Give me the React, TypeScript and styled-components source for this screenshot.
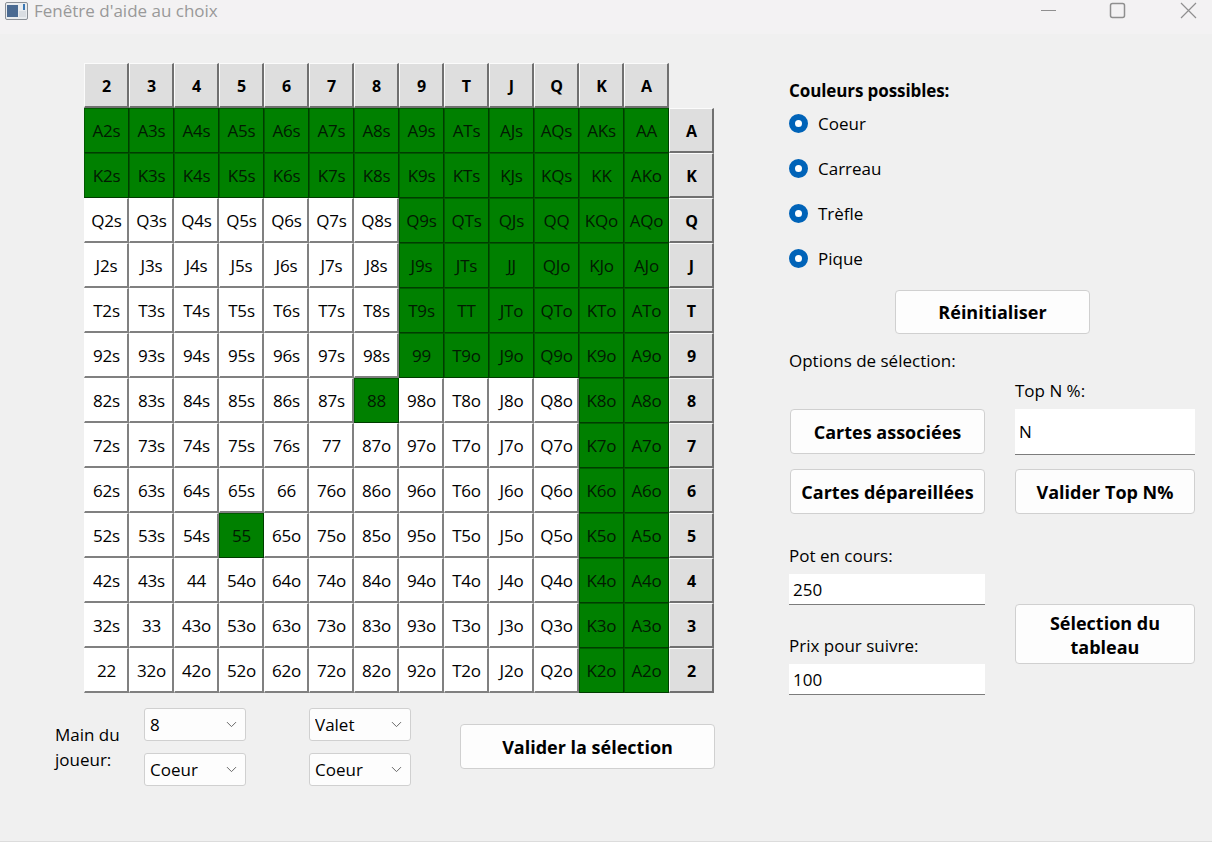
import styled, { createGlobalStyle } from "styled-components";
import { ChevronDown } from "lucide-react";

const GlobalStyle = createGlobalStyle`
  html, body {
    margin: 0;
    padding: 0;
    background: #f0f0f0;
  }
  * {
    box-sizing: border-box;
  }
`;

const FONT = `"Open Sans", "Noto Sans", "Liberation Sans", sans-serif`;

const Page = styled.div`
  width: 1212px;
  height: 842px;
  overflow: hidden;
  display: flex;
  flex-direction: column;
  font-family: ${FONT};
  color: #000;
  background: #f0f0f0;
  border-bottom: 1px solid #dcdcdc;
`;

const TitleBar = styled.header`
  height: 34px;
  flex-shrink: 0;
  display: flex;
  align-items: flex-start;
  background: #f3f2f3;
  padding-left: 5px;
`;

const WindowIcon = styled.svg`
  width: 23px;
  height: 18px;
  margin-top: 2px;
`;

const Title = styled.span`
  margin-left: 6px;
  font-size: 17px;
  line-height: 22px;
  color: #999;
`;

const WindowButtons = styled.div`
  margin-left: auto;
  display: flex;
  margin-right: 15px;
  gap: 54px;
`;

const WindowGlyph = styled.svg`
  width: 17px;
  height: 20px;
  stroke: #8f8f8f;
  fill: none;
  overflow: visible;
`;

const Content = styled.main`
  flex: 1;
  display: flex;
  padding: 29px 0 0 55px;
`;

const LeftColumn = styled.section`
  width: 660px;
  display: flex;
  flex-direction: column;
`;

const RangeGrid = styled.div`
  display: grid;
  grid-template-columns: repeat(14, 45px);
  grid-auto-rows: 45px;
  margin-left: 29px;
  width: 630px;
`;

const HeaderCell = styled.div`
  display: flex;
  align-items: center;
  justify-content: center;
  padding: 1px 0 0 1px;
  background: #dedede;
  border-top: 1px solid #fbfbfb;
  border-left: 1px solid #fbfbfb;
  border-right: 2px solid #707070;
  border-bottom: 2px solid #707070;
  font-size: 16px;
  font-weight: 700;
`;

const EmptyCell = styled.div``;

const HandCell = styled.div<{ $selected: boolean }>`
  display: flex;
  align-items: center;
  justify-content: center;
  padding-left: ${(p) => (p.$selected ? 0 : 1)}px;
  font-size: 17px;
  letter-spacing: -0.2px;
  background: ${(p) => (p.$selected ? "#008000" : "#ffffff")};
  border-top: 1px solid ${(p) => (p.$selected ? "#005a00" : "#ffffff")};
  border-left: 1px solid ${(p) => (p.$selected ? "#005a00" : "#ffffff")};
  border-right: ${(p) => (p.$selected ? "1px solid #003c00" : "2px solid #808080")};
  border-bottom: ${(p) => (p.$selected ? "1px solid #003c00" : "2px solid #808080")};
  color: ${(p) => (p.$selected ? "#021a02" : "#000")};
`;

const HandRow = styled.div`
  display: grid;
  grid-template-columns: 89px 102px 63px 102px 49px 255px;
  grid-template-rows: 33px 33px;
  row-gap: 12px;
  margin-top: 15px;
`;

const HandLabel = styled.div`
  grid-row: 1 / span 2;
  align-self: center;
  font-size: 17px;
  line-height: 25px;
`;

const ComboWrap = styled.div`
  position: relative;
  height: 33px;
`;

const Combo = styled.select`
  appearance: none;
  width: 100%;
  height: 100%;
  padding: 0 0 0 5px;
  background: #fdfdfd;
  border: 1px solid #d0d0d0;
  border-radius: 3px;
  font-family: ${FONT};
  font-size: 17px;
  color: #000;
`;

const ComboChevron = styled(ChevronDown)`
  position: absolute;
  right: 6px;
  top: 8px;
  width: 17px;
  height: 17px;
  color: #666;
  stroke-width: 1.4;
  pointer-events: none;
`;

const ActionButton = styled.button<{ $height: number }>`
  height: ${(p) => p.$height}px;
  width: 100%;
  background: #fdfdfd;
  border: 1px solid #d0d0d0;
  border-radius: 4px;
  font-family: ${FONT};
  font-size: 18px;
  font-weight: 700;
  line-height: 24px;
  color: #000;
  padding: 0 4px;
`;

const ValidateButton = styled(ActionButton)`
  grid-column: 6;
  grid-row: 1 / span 2;
  align-self: center;
  margin-top: -1px;
`;

const TableButton = styled(ActionButton)`
  padding-top: 2px;
`;

const RightColumn = styled.aside`
  width: 406px;
  margin-left: 74px;
  padding-top: 16px;
  display: flex;
  flex-direction: column;
`;

const SectionTitle = styled.div`
  font-size: 17px;
  font-weight: 700;
  line-height: 24px;
  letter-spacing: -0.1px;
  margin-bottom: 3px;
`;

const RadioList = styled.div`
  display: flex;
  flex-direction: column;
`;

const RadioRow = styled.label`
  height: 45px;
  display: flex;
  align-items: center;
  gap: 10px;
  font-size: 17px;
  padding-bottom: 11px;
`;

const RadioDot = styled.input`
  appearance: none;
  margin: 0;
  width: 19px;
  height: 19px;
  border-radius: 50%;
  background: #fff;
  border: 6px solid #0063b8;
`;

const ResetRow = styled.div`
  width: 195px;
  margin: 4px 0 0 106px;
`;

const PlainLabel = styled.div`
  font-size: 17px;
  line-height: 24px;
`;

const OptionsLabel = styled(PlainLabel)`
  margin-top: 15px;
`;

const OptionsGrid = styled.div`
  display: grid;
  grid-template-columns: 196px 180px;
  column-gap: 30px;
  grid-template-rows: 31px 45px 45px;
  margin-top: 5px;
`;

const TopLabel = styled(PlainLabel)`
  grid-column: 2;
  margin-top: 1px;
`;

const OptionCell = styled.div`
  padding-left: 1px;
`;

const ValidateCell = styled.div`
  margin-top: 15px;
  grid-column: 2;
  grid-row: 3;
`;

const PairedCell = styled(OptionCell)`
  margin-top: 15px;
`;

const TextField = styled.input<{ $height: number; $size: number }>`
  display: block;
  width: 100%;
  height: ${(p) => p.$height}px;
  padding: 0 4px;
  background: #ffffff;
  border: none;
  border-bottom: 1px solid #7c7c7c;
  font-family: ${FONT};
  font-size: ${(p) => p.$size}px;
  color: #000;
  outline: none;
`;

const BottomGrid = styled.div`
  display: grid;
  grid-template-columns: 196px 180px;
  column-gap: 30px;
  margin-top: 59px;
`;

const PotColumn = styled.div`
  display: flex;
  flex-direction: column;
`;

const PotLabel = styled(PlainLabel)`
  margin-top: -14px;
  margin-bottom: 6px;
`;

const FollowLabel = styled(PlainLabel)`
  margin-top: 29px;
  margin-bottom: 6px;
`;

const TableButtonCell = styled.div`
  padding-top: 46px;
`;

const RANKS = ["A", "K", "Q", "J", "T", "9", "8", "7", "6", "5", "4", "3", "2"];
const COLS = [...RANKS].reverse();

// how many cols are filled from the right, per row; the lone pairs are separate
const GREEN_FROM: Record<string, number> = {
  A: 0,
  K: 0,
  Q: 7,
  J: 7,
  T: 7,
  "9": 7,
  "8": 11,
  "7": 11,
  "6": 11,
  "5": 11,
  "4": 11,
  "3": 11,
  "2": 11,
};
const LONE_PAIRS = ["88", "55"];

const handName = (row: string, col: string): string => {
  if (row === col) return row + col;
  const suited = RANKS.indexOf(row) < RANKS.indexOf(col);
  return suited ? `${row}${col}s` : `${col}${row}o`;
};

const Suit = ["Coeur", "Carreau", "Trèfle", "Pique"];

const Select = ({ value, options }: { value: string; options: string[] }) => (
  <ComboWrap>
    <Combo defaultValue={value}>
      {options.map((o) => (
        <option key={o}>{o}</option>
      ))}
    </Combo>
    <ComboChevron />
  </ComboWrap>
);

const CARD_NAMES = ["8", "9", "10", "Valet", "Dame", "Roi", "As"];

const App = () => {
  return (
    <Page>
      <GlobalStyle />
      <TitleBar>
        <WindowIcon viewBox="0 0 23 18">
          <rect x="0.5" y="0.5" width="22" height="17" rx="1.5" fill="#e9ecef" stroke="#8a8f96" />
          <rect x="2" y="3" width="11" height="12" fill="#4a6a92" />
          <rect x="14" y="9" width="7" height="6" fill="#d9dde2" />
          <rect x="18" y="2" width="2" height="6" fill="#3c78b4" />
        </WindowIcon>
        <Title>Fenêtre d'aide au choix</Title>
        <WindowButtons>
          <WindowGlyph viewBox="0 0 17 20">
            <path d="M3 10.5h15" />
          </WindowGlyph>
          <WindowGlyph viewBox="0 0 17 20">
            <rect x="1.5" y="3.5" width="14" height="14" rx="2" strokeWidth="1.5" />
          </WindowGlyph>
          <WindowGlyph viewBox="0 0 17 20">
            <path d="M1 3l15 15M16 3L1 18" strokeWidth="1.2" />
          </WindowGlyph>
        </WindowButtons>
      </TitleBar>
      <Content>
        <LeftColumn>
          <RangeGrid>
            {COLS.map((c) => (
              <HeaderCell key={c}>{c}</HeaderCell>
            ))}
            <EmptyCell />
            {RANKS.map((row) => (
              <>
                {COLS.map((col, i) => {
                  const name = handName(row, col);
                  return (
                    <HandCell
                      key={name}
                      $selected={i >= GREEN_FROM[row] || LONE_PAIRS.includes(name)}
                    >
                      {name}
                    </HandCell>
                  );
                })}
                <HeaderCell>{row}</HeaderCell>
              </>
            ))}
          </RangeGrid>
          <HandRow>
            <HandLabel>
              Main du
              <br />
              joueur:
            </HandLabel>
            <Select value="8" options={CARD_NAMES} />
            <div />
            <Select value="Valet" options={CARD_NAMES} />
            <ValidateButton $height={45}>Valider la sélection</ValidateButton>
            <div />
            <Select value="Coeur" options={Suit} />
            <div />
            <Select value="Coeur" options={Suit} />
          </HandRow>
        </LeftColumn>
        <RightColumn>
          <SectionTitle>Couleurs possibles:</SectionTitle>
          <RadioList>
            {Suit.map((s) => (
              <RadioRow key={s}>
                <RadioDot type="radio" name={s} defaultChecked />
                {s}
              </RadioRow>
            ))}
          </RadioList>
          <ResetRow>
            <ActionButton $height={44}>Réinitialiser</ActionButton>
          </ResetRow>
          <OptionsLabel>Options de sélection:</OptionsLabel>
          <OptionsGrid>
            <TopLabel>Top N %:</TopLabel>
            <OptionCell>
              <ActionButton $height={45}>Cartes associées</ActionButton>
            </OptionCell>
            <TextField $height={46} $size={17} defaultValue="N" />
            <PairedCell>
              <ActionButton $height={45}>Cartes dépareillées</ActionButton>
            </PairedCell>
            <ValidateCell>
              <ActionButton $height={45}>Valider Top N%</ActionButton>
            </ValidateCell>
          </OptionsGrid>
          <BottomGrid>
            <PotColumn>
              <PotLabel>Pot en cours:</PotLabel>
              <TextField $height={31} $size={17} defaultValue="250" />
              <FollowLabel>Prix pour suivre:</FollowLabel>
              <TextField $height={31} $size={17} defaultValue="100" />
            </PotColumn>
            <TableButtonCell>
              <TableButton $height={60}>
                Sélection du
                <br />
                tableau
              </TableButton>
            </TableButtonCell>
          </BottomGrid>
        </RightColumn>
      </Content>
    </Page>
  );
};

export default App;
